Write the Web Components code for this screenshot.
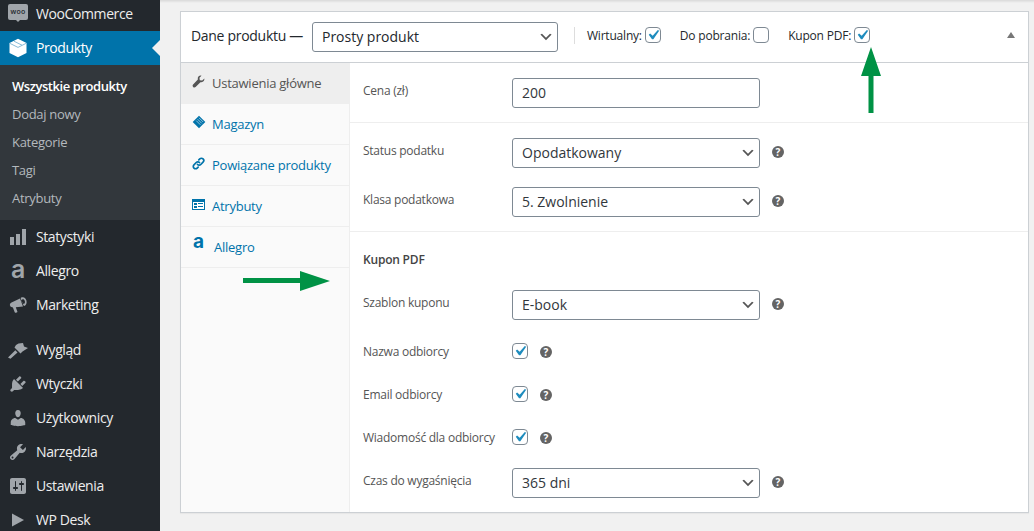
<!DOCTYPE html>
<html lang="pl">
<head>
<meta charset="utf-8">
<title>Produkt</title>
<style>
    html, body {
        margin: 0;
        height: 531px;
        overflow: hidden;
        background: #f1f1f1;
        font-family: "Open Sans", "Noto Sans", sans-serif;
        color: #32373c;
    }
    wp-admin svg { display: block; }
</style>
</head>
<body>

<wp-admin>
    <wp-sidebar slot="sidebar">
        <wp-menu-item>
            <woo-logo slot="icon"></woo-logo>WooCommerce
        </wp-menu-item>
        <wp-menu-item active>
            <svg slot="icon" width="20" height="20" viewBox="0 0 20 20"><path fill="#fff" d="M10 .8l8.500 4.200v10L10 19.300 1.500 15V5z"/><path fill="none" stroke="#7db4d2" stroke-width=".9" d="M2 5.400l8 4 8-4M6 3.200l8 4"/></svg>
            Produkty
        </wp-menu-item>
        <wp-submenu>
            <wp-sub-item current>Wszystkie produkty</wp-sub-item>
            <wp-sub-item>Dodaj nowy</wp-sub-item>
            <wp-sub-item>Kategorie</wp-sub-item>
            <wp-sub-item>Tagi</wp-sub-item>
            <wp-sub-item>Atrybuty</wp-sub-item>
        </wp-submenu>
        <wp-menu-item>
            <svg slot="icon" width="20" height="20" viewBox="0 0 20 20"><path fill="currentColor" d="M18 18V2h-4v16h4zm-6 0V7H8v11h4zm-6 0v-8H2v8h4z"/></svg>
            Statystyki
        </wp-menu-item>
        <wp-menu-item>
            <allegro-logo slot="icon"></allegro-logo>Allegro
        </wp-menu-item>
        <wp-menu-item>
            <svg slot="icon" width="20" height="20" viewBox="0 0 20 20"><path fill="currentColor" d="M3.500 7.500l8.500-4 3 8-7.200.8 1.700 4.700q-1.500 1.500-2.800.3l-1.800-4.800Q2 12 1.800 10q0-1.700 1.700-2.500z"/><path fill="currentColor" fill-rule="evenodd" d="M14 2.300c2-.6 4 1 4.500 3.500s-.3 4.600-2.200 5.200c-.4-.2-.7-.6-1-1.100l-2.700-7c.4-.3.900-.5 1.400-.6zm.6 2c-.9.3-1.200 1.500-.8 2.800s1.400 2 2.200 1.700 1.200-1.500.8-2.800-1.400-2-2.200-1.700z"/></svg>
            Marketing
        </wp-menu-item>
        <wp-menu-gap></wp-menu-gap>
        <wp-menu-item>
            <svg slot="icon" width="20" height="20" viewBox="0 0 20 20"><path fill="currentColor" d="M0 17.500l2.500 1.300 7-6.300-2.200-2.200zM6.500 7.500L12.500 13.500l2-2 5.500-3.500-4-1.500-1-3.500-4.500.5-2.500 1.500z"/></svg>
            Wygląd
        </wp-menu-item>
        <wp-menu-item>
            <svg slot="icon" width="20" height="20" viewBox="0 0 20 20"><path fill="currentColor" d="M13.110 4.360L9.870 7.600 8 5.730l3.240-3.240c.35-.34 1.050-.2 1.560.32.52.51.66 1.210.31 1.550zm-8 1.770l.91-1.120 9.010 9.010-1.190.84c-.71.71-2.630 1.160-3.820 1.160H6.140L4.900 17.260c-.59.59-1.540.59-2.120 0-.59-.58-.59-1.530 0-2.120l1.240-1.240v-3.880c0-1.130.4-3.190 1.090-3.890zm7.260 3.970l3.240-3.240c.34-.35 1.040-.21 1.550.31.52.51.66 1.210.31 1.550l-3.240 3.250z"/></svg>
            Wtyczki
        </wp-menu-item>
        <wp-menu-item>
            <svg slot="icon" width="20" height="20" viewBox="0 0 20 20"><path fill="currentColor" d="M10 9.250c-2.270 0-2.730-3.440-2.730-3.440C7 4.020 7.820 2 9.970 2c2.160 0 2.980 2.020 2.710 3.810 0 0-.41 3.440-2.680 3.440zm0 2.570L12.720 10c2.390 0 4.520 2.330 4.520 4.530v2.490s-3.650 1.130-7.240 1.130c-3.650 0-7.240-1.130-7.240-1.130v-2.490c0-2.250 1.940-4.480 4.470-4.480z"/></svg>
            Użytkownicy
        </wp-menu-item>
        <wp-menu-item>
            <svg slot="icon" width="20" height="20" viewBox="0 0 20 20"><path fill="currentColor" d="M16.680 9.770c-1.340 1.340-3.300 1.670-4.950.99l-5.410 6.520c-.99.99-2.590.99-3.580 0s-.99-2.590 0-3.570l6.520-5.420c-.68-1.650-.35-3.610.99-4.950 1.280-1.280 3.120-1.620 4.720-1.060l-2.890 2.890 2.820 2.820 2.860-2.870c.53 1.580.18 3.390-1.080 4.650zM3.810 16.210c.4.39 1.040.39 1.430 0 .4-.4.4-1.040 0-1.430-.39-.4-1.030-.4-1.430 0-.39.39-.39 1.030 0 1.430z"/></svg>
            Narzędzia
        </wp-menu-item>
        <wp-menu-item>
            <svg slot="icon" width="20" height="20" viewBox="0 0 20 20"><path fill="currentColor" d="M18 16V4c0-1.100-.9-2-2-2H4c-1.100 0-2 .9-2 2v12c0 1.100.9 2 2 2h12c1.100 0 2-.9 2-2zM8 11h1c.55 0 1 .45 1 1s-.45 1-1 1H8v1.500c0 .28-.22.5-.5.5s-.5-.22-.5-.5V13H6c-.55 0-1-.45-1-1s.45-1 1-1h1V5.500c0-.28.22-.5.5-.5s.5.22.5.5V11zm5-2h-1c-.55 0-1-.45-1-1s.45-1 1-1h1V5.500c0-.28.22-.5.5-.5s.5.22.5.5V7h1c.55 0 1 .45 1 1s-.45 1-1 1h-1v5.500c0 .28-.22.5-.5.5s-.5-.22-.5-.5V9z"/></svg>
            Ustawienia
        </wp-menu-item>
        <wp-menu-item>
            <svg slot="icon" width="20" height="20" viewBox="0 0 20 20"><path fill="currentColor" d="M4 3.500L16 10 4 16.500z"/></svg>
            WP Desk
        </wp-menu-item>
    </wp-sidebar>

    <product-data>
        <span slot="title">Dane produktu —</span>
        <fake-select slot="type" width="246" size="big">Prosty produkt</fake-select>
        <header-check slot="flags" checked>Wirtualny:</header-check>
        <header-check slot="flags">Do pobrania:</header-check>
        <header-check slot="flags" checked>Kupon PDF:</header-check>

        <product-tab slot="tabs" active>
            <svg slot="icon" width="13" height="13" viewBox="0 0 20 20"><path fill="currentColor" d="M19 5.500c.6 3-1.800 6.500-6 5.500L5.500 18.500c-1 1-2.700 1-3.800-.2-1-1-1-2.600 0-3.500L9 7c-1-4.200 2.500-6.700 5.500-6l-3 3.300.5 3.700 3.700.5z"/></svg>
            Ustawienia główne
        </product-tab>
        <product-tab slot="tabs">
            <svg slot="icon" width="14" height="14" viewBox="0 0 20 20"><path fill="currentColor" d="M10 1l9 9-9 9-9-9z"/><path stroke="#d5e6f0" stroke-width="1" d="M6 8l6 6M8 6l6 6M10 4l6 6"/></svg>
            Magazyn
        </product-tab>
        <product-tab slot="tabs">
            <svg slot="icon" width="13" height="13" viewBox="0 0 20 20"><path fill="none" stroke="currentColor" stroke-width="2.600" stroke-linecap="round" d="M8.500 11.500a3.500 3.500 0 0 0 5 0l3.500-3.500a3.500 3.500 0 0 0-5-5l-1.500 1.500M11.500 8.500a3.500 3.500 0 0 0-5 0L3 12a3.500 3.500 0 0 0 5 5l1.500-1.500"/></svg>
            Powiązane produkty
        </product-tab>
        <product-tab slot="tabs">
            <svg slot="icon" width="13" height="13" viewBox="0 0 13 13"><path fill="currentColor" d="M0 1h13v11H0z"/><path fill="#fff" d="M1 4h11v7H1z"/><path fill="currentColor" d="M2 5h3v2H2zm0 3h3v2H2zm4-3h5v1H6zm0 3h5v1H6z"/></svg>
            Atrybuty
        </product-tab>
        <product-tab slot="tabs" wide>
            <allegro-logo slot="icon" small></allegro-logo>Allegro
        </product-tab>

        <form-group slot="panel" gap="0">
            <field-row label="Cena (zł)">
                <fake-input>200</fake-input>
            </field-row>
        </form-group>
        <form-group slot="panel" gap="19">
            <field-row label="Status podatku">
                <fake-select>Opodatkowany</fake-select><help-tip></help-tip>
            </field-row>
            <field-row label="Klasa podatkowa">
                <fake-select>5. Zwolnienie</fake-select><help-tip></help-tip>
            </field-row>
        </form-group>
        <form-group slot="panel" gap="23" last>
            <group-heading>Kupon PDF</group-heading>
            <field-row label="Szablon kuponu">
                <fake-select>E-book</fake-select><help-tip></help-tip>
            </field-row>
            <field-row label="Nazwa odbiorcy" compact>
                <fake-check checked></fake-check><help-tip near></help-tip>
            </field-row>
            <field-row label="Email odbiorcy" compact spaced>
                <fake-check checked></fake-check><help-tip near></help-tip>
            </field-row>
            <field-row label="Wiadomość dla odbiorcy" compact spaced>
                <fake-check checked></fake-check><help-tip near></help-tip>
            </field-row>
            <field-row label="Czas do wygaśnięcia">
                <fake-select>365 dni</fake-select><help-tip></help-tip>
            </field-row>
        </form-group>
    </product-data>

    <!-- green callout arrows lie over the panel -->
    <svg slot="overlay" width="1034" height="531" viewBox="0 0 1034 531">
        <path fill="#009245" d="M871 47l10 29h-7.500v37h-5V76H861z"/>
        <path fill="#009245" d="M330 281l-30 10 0-8h-57v-5h57v-7z"/>
    </svg>
</wp-admin>

<script>
// every element here just clones its markup into an open shadow root
class ShadowElement extends HTMLElement {
    connectedCallback() {
        if (this.shadowRoot) return;
        const shadow = this.attachShadow({mode: "open"});
        shadow.innerHTML = this.constructor.markup;
        this.setup(shadow);
    }
    setup(shadow) {}
}

function register(name, markup, setup) {
    customElements.define(name, class extends ShadowElement {
        static markup = markup;
        setup(shadow) {
            if (setup) setup(this, shadow);
        }
    });
}

const CHEVRON = `<svg width="16" height="16" viewBox="0 0 20 20" style="display:block"><path fill="#555" d="M5 6l5 5 5-5 2 1-7 7-7-7z"/></svg>`;
const CHECK = `<svg width="20" height="20" viewBox="0 0 20 20" style="display:block;margin:-3px 0 0 -3px"><path fill="#1e8cbe" d="M14.830 4.890l1.340.94-5.810 8.380H9.020L5.780 9.670l1.340-1.250 2.570 2.400z"/></svg>`;

register("wp-admin", `
<style>
    :host { display: flex; height: 531px; position: relative; overflow: hidden; }
    .content { flex: 1; padding: 11px 5px 0 20px; min-width: 0;
        background: linear-gradient(#d9d9d9, #f1f1f1 3px); }
    .overlay { position: absolute; left: 0; top: 0; pointer-events: none; }
</style>
<slot name="sidebar"></slot>
<div class="content"><slot></slot></div>
<div class="overlay"><slot name="overlay"></slot></div>`);

register("wp-sidebar", `
<style>
    :host { display: block; width: 160px; flex: none; background: #23282d; margin-top: -3px; height: 540px; }
</style>
<slot></slot>`);

register("wp-menu-item", `
<style>
    :host { display: flex; align-items: center; height: 34px; color: #eee; font-size: 14px; position: relative; letter-spacing: -.4px; }
    :host([active]) { background: #0073aa; color: #fff; }
    :host([active])::after { content: ""; position: absolute; right: 0; top: 9px;
        border: 8px solid transparent; border-right-color: #f1f1f1; border-left-width: 0; }
    .icon { width: 20px; height: 20px; margin: 0 8px 0 8px; color: #a0a5aa; flex: none; }
    :host([active]) .icon { color: #fff; }
    .label { padding-bottom: 2px; }
</style>
<div class="icon"><slot name="icon"></slot></div>
<span class="label"><slot></slot></span>`);

register("wp-submenu", `
<style>
    :host { display: block; background: #32373c; padding: 7px 0 8px; }
</style>
<slot></slot>`);

register("wp-sub-item", `
<style>
    :host { display: block; height: 28px; line-height: 28px; padding-left: 12px; font-size: 13px;
        color: #b4b9be; letter-spacing: -.3px; }
    :host([current]) { color: #fff; font-weight: 600; letter-spacing: -.45px; }
</style>
<slot></slot>`);

register("wp-menu-gap", `<style>:host { display: block; height: 11px; }</style>`);

register("woo-logo", `
<style>
    :host { display: block; width: 20px; height: 16px; background: #a0a5aa; border-radius: 2px;
        color: #23282d; font: 600 7px/16px "Open Sans", sans-serif; text-align: center; position: relative; letter-spacing: .2px; }
    :host::after { content: ""; position: absolute; left: 8px; top: 16px; border: 2px solid transparent; border-top-color: #a0a5aa; }
</style>
woo`);

register("allegro-logo", `
<style>
    :host { display: block; width: 20px; height: 20px; color: inherit; text-align: center;
        font: 600 25px/16px "Inter", sans-serif; }
    :host([small]) { font-size: 19px; font-weight: 700; width: 13px; line-height: 13px; }
</style>
a`);

register("product-data", `
<style>
    :host { display: flex; flex-direction: column; height: 502px; box-sizing: border-box;
        background: #fff; border: 1px solid #ccd0d4; box-shadow: 0 1px 1px rgba(0,0,0,.04); }
    header { display: flex; align-items: center; height: 50px; flex: none; padding-left: 10px;
        border-bottom: 1px solid #ccd0d4; position: relative; }
    .title { font-size: 14px; font-weight: 500; color: #23282d; margin: 0 9px 4px 0; letter-spacing: -.3px; }
    .divider { width: 1px; height: 17px; background: #ddd; margin: 0 12px 4px 16px; }
    .flags { display: flex; gap: 19px; margin-bottom: 4px; }
    .toggle { position: absolute; left: 826px; top: 20px; border: 4px solid transparent; border-bottom: 6px solid #777; border-top-width: 0; }
    .body { flex: 1; display: flex; min-height: 0; }
    nav { width: 168px; flex: none; background: #fafafa; border-right: 1px solid #eee; }
    main { flex: 1; display: flex; flex-direction: column; min-width: 0; }
</style>
<header>
    <div class="title"><slot name="title"></slot></div>
    <slot name="type"></slot>
    <div class="divider"></div>
    <div class="flags"><slot name="flags"></slot></div>
    <div class="toggle"></div>
</header>
<div class="body">
    <nav><slot name="tabs"></slot></nav>
    <main><slot name="panel"></slot></main>
</div>`);

register("product-tab", `
<style>
    :host { display: flex; align-items: center; height: 41px; border-bottom: 1px solid #eee; box-sizing: border-box;
        color: #0073aa; font-size: 13px; letter-spacing: -.25px; }
    :host([active]) { background: #eee; color: #555; border-bottom-color: #eee; }
    .icon { width: 13px; margin: -4px 7px 0 11px; flex: none; }
    :host([wide]) .icon { margin-right: 9px; }
    .label { padding-bottom: 1px; }
</style>
<div class="icon"><slot name="icon"></slot></div>
<span class="label"><slot></slot></span>`);

register("form-group", `
<style>
    :host { display: flex; flex-direction: column; padding: 15px 0 14px; border-bottom: 1px solid #eee; }
    :host([last]) { border-bottom: 0; padding-top: 18px; }
</style>
<slot></slot>`, (el) => {
    el.style.gap = el.getAttribute("gap") + "px";
});

register("group-heading", `
<style>
    :host { display: block; height: 17px; line-height: 19px; padding-left: 13px; font-size: 12px; font-weight: 600; color: #444; letter-spacing: -.2px; }
</style>
<slot></slot>`);

register("field-row", `
<style>
    :host { display: flex; align-items: flex-start; }
    :host([spaced]) { margin-top: 4px; }
    .label { width: 162px; padding-left: 13px; box-sizing: border-box; flex: none; font-size: 12px; line-height: 16px; margin-top: 5px; color: #555; letter-spacing: -.25px; }
    :host([compact]) .label { margin-top: 0; height: 16px; line-height: 18px; white-space: nowrap; }
    .control { display: flex; align-items: center; }
</style>
<div class="label"></div>
<div class="control"><slot></slot></div>`, (el, shadow) => {
    shadow.querySelector(".label").textContent = el.getAttribute("label");
});

register("fake-input", `
<style>
    :host { display: block; width: 248px; height: 30px; line-height: 27px; box-sizing: border-box; padding-left: 9px;
        background: #fff; border: 1px solid #7e8993; border-radius: 3px; font-size: 14px; color: #32373c; }
</style>
<slot></slot>`);

register("fake-select", `
<style>
    :host { display: flex; align-items: center; justify-content: space-between; width: 248px; height: 30px;
        box-sizing: border-box; padding: 0 3px 1px 9px; flex: none;
        background: #fff; border: 1px solid #7e8993; border-radius: 3px; font-size: 14px; color: #32373c; }
    :host([size=big]) { color: #23282d; }
</style>
<span><slot></slot></span>${CHEVRON}`, (el) => {
    if (el.hasAttribute("width")) el.style.width = el.getAttribute("width") + "px";
});

register("fake-check", `
<style>
    :host { display: block; width: 16px; height: 16px; box-sizing: border-box; flex: none; overflow: visible;
        background: #fff; border: 1px solid #7e8993; border-radius: 4px; }
</style>
<div class="mark"></div>`, (el, shadow) => {
    if (el.hasAttribute("checked")) shadow.querySelector(".mark").innerHTML = CHECK;
});

register("header-check", `
<style>
    :host { display: flex; align-items: center; gap: 3px; font-size: 12px; font-weight: 500; color: #23282d; letter-spacing: -.2px; }
</style>
<slot></slot><div class="box"></div>`, (el, shadow) => {
    const check = document.createElement("fake-check");
    if (el.hasAttribute("checked")) check.setAttribute("checked", "");
    shadow.querySelector(".box").append(check);
});

register("help-tip", `
<style>
    :host { display: flex; align-items: center; justify-content: center; width: 12px; height: 12px; margin: -3px 0 0 12px;
        border-radius: 50%; background: #646464; color: #fff; font: 700 10px/12px "Open Sans", sans-serif; flex: none; }
    :host([near]) { margin: 1px 0 0 12px; }
</style>
?`);
</script>
</body>
</html>
